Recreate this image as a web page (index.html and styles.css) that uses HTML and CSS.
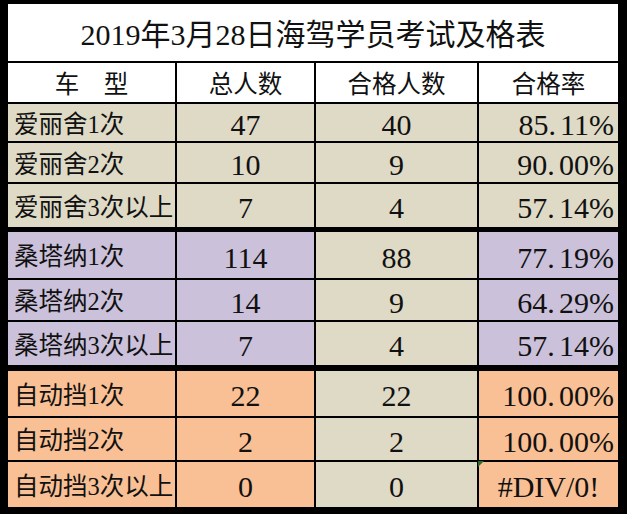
FILE: index.html
```html
<!DOCTYPE html>
<html lang="zh-CN">
<head>
<meta charset="utf-8">
<title>2019年3月28日海驾学员考试及格表</title>
<link rel="stylesheet" href="styles.css">
</head>
<body>
<div class="sheet">
  <div class="title">2019年3月28日海驾学员考试及格表</div>

  <div class="head">
    <div class="cell c">车　型</div>
    <div class="cell c">总人数</div>
    <div class="cell c">合格人数</div>
    <div class="cell c">合格率</div>
  </div>

  <div class="group g-ailishe">
    <div class="cell label tan">爱丽舍1次</div>
    <div class="cell num tan">47</div>
    <div class="cell num tan">40</div>
    <div class="cell pct tan">85<span class="dot">.</span>11%</div>

    <div class="cell label tan">爱丽舍2次</div>
    <div class="cell num tan">10</div>
    <div class="cell num tan">9</div>
    <div class="cell pct tan">90<span class="dot">.</span>00%</div>

    <div class="cell label tan">爱丽舍3次以上</div>
    <div class="cell num tan">7</div>
    <div class="cell num tan">4</div>
    <div class="cell pct tan">57<span class="dot">.</span>14%</div>
  </div>

  <div class="group g-santana">
    <div class="cell label lilac">桑塔纳1次</div>
    <div class="cell num lilac">114</div>
    <div class="cell num tan">88</div>
    <div class="cell pct lilac">77<span class="dot">.</span>19%</div>

    <div class="cell label lilac">桑塔纳2次</div>
    <div class="cell num lilac">14</div>
    <div class="cell num tan">9</div>
    <div class="cell pct lilac">64<span class="dot">.</span>29%</div>

    <div class="cell label lilac">桑塔纳3次以上</div>
    <div class="cell num lilac">7</div>
    <div class="cell num tan">4</div>
    <div class="cell pct lilac">57<span class="dot">.</span>14%</div>
  </div>

  <div class="group g-auto">
    <div class="cell label peach">自动挡1次</div>
    <div class="cell num peach">22</div>
    <div class="cell num tan">22</div>
    <div class="cell pct peach">100<span class="dot">.</span>00%</div>

    <div class="cell label peach">自动挡2次</div>
    <div class="cell num peach">2</div>
    <div class="cell num tan">2</div>
    <div class="cell pct peach">100<span class="dot">.</span>00%</div>

    <div class="cell label peach">自动挡3次以上</div>
    <div class="cell num peach">0</div>
    <div class="cell num tan">0</div>
    <div class="cell err peach"><span class="flag"></span>#DIV/0!</div>
  </div>
</div>
</body>
</html>
```

FILE: styles.css
```css
* {
  box-sizing: border-box;
}

html, body {
  margin: 0;
  padding: 0;
  background: #000;
}

body {
  width: 627px;
  height: 514px;
  overflow: hidden;
  font-family: "Liberation Serif", "Noto Sans CJK SC", serif;
  color: #111;
}

.sheet {
  width: 627px;
  height: 514px;
  padding: 4px 9px 7px 8px;
  background: #000;
  display: flex;
  flex-direction: column;
  gap: 2px;
}

.title {
  height: 57px;
  background: #fff;
  display: flex;
  align-items: center;
  justify-content: center;
  padding-top: 5px;
  font-size: 30px;
  line-height: 1;
  white-space: nowrap;
}

.head,
.group {
  display: grid;
  grid-template-columns: 167px 137px 161px 139px;
  column-gap: 2px;
  row-gap: 2px;
}

.head {
  height: 39px;
}

.head .cell {
  background: #fff;
  font-size: 24.5px;
}

.g-ailishe {
  grid-template-rows: 37px 39px 43px;
}

.g-santana {
  margin-top: 3px;
  grid-template-rows: 46px 40px 43px;
}

.g-auto {
  margin-top: 4px;
  grid-template-rows: 45px 42px 45px;
}

.cell {
  position: relative;
  display: flex;
  align-items: center;
  padding-top: 5px;
  line-height: 1;
  white-space: nowrap;
}

.c {
  justify-content: center;
}

.label {
  font-size: 24.5px;
  padding-left: 6px;
}

.num {
  justify-content: center;
  font-size: 30px;
}

.pct {
  justify-content: flex-end;
  font-size: 30px;
  padding-right: 4px;
}

.dot {
  margin-right: 0.14em;
}

.err {
  justify-content: center;
  font-size: 30px;
}

.tan {
  background: #dedac6;
}

.lilac {
  background: #cbc1da;
}

.peach {
  background: #f9c095;
}

.flag {
  position: absolute;
  left: -1px;
  top: -1px;
  width: 0;
  height: 0;
  border-top: 6px solid #2b6e2b;
  border-right: 6px solid transparent;
}
```
